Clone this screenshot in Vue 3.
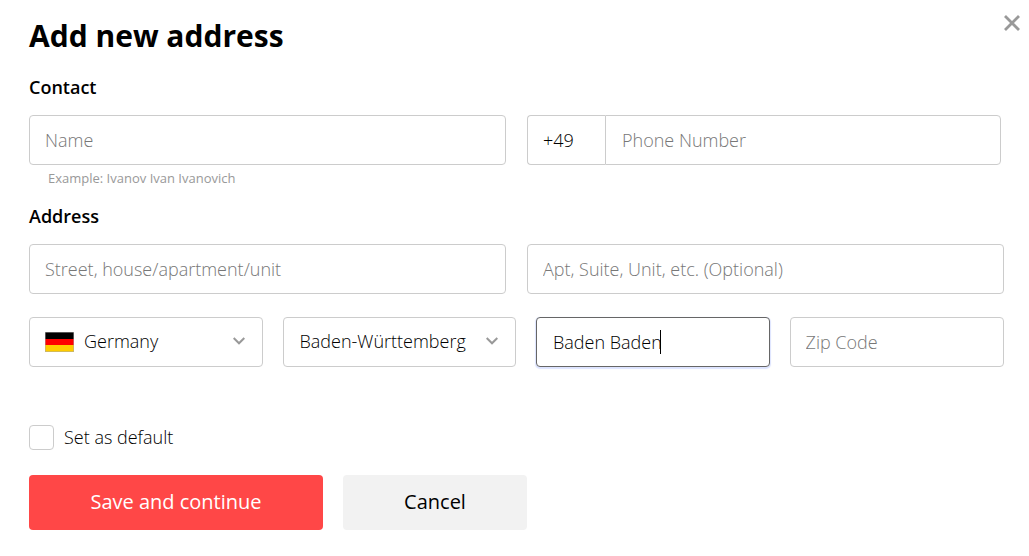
<script setup>
import { ref } from 'vue'
const name = ref('')
const phone = ref('')
const street = ref('')
const apt = ref('')
const city = ref('Baden Baden')
const zip = ref('')
const isDefault = ref(false)
</script>

<template>
  <form class="dialog" @submit.prevent>
    <button type="button" class="close" aria-label="Close">
      <svg viewBox="0 0 16 16" width="16" height="16"><path d="M1 1L15 15M15 1L1 15" stroke="#999" stroke-width="2.8" fill="none" /></svg>
    </button>
    <h1>Add new address</h1>
    <h2>Contact</h2>
    <div class="row two">
      <div>
        <input v-model="name" class="field" type="text" placeholder="Name" aria-label="Name" aria-describedby="name-hint" />
        <p id="name-hint" class="hint">Example: Ivanov Ivan Ivanovich</p>
      </div>
      <div class="phone">
        <input class="field code" type="text" value="+49" aria-label="Country code" />
        <input v-model="phone" class="field number" type="tel" placeholder="Phone Number" aria-label="Phone Number" />
      </div>
    </div>
    <h2>Address</h2>
    <div class="row two">
      <input v-model="street" class="field" type="text" placeholder="Street, house/apartment/unit" aria-label="Street" />
      <input v-model="apt" class="field" type="text" placeholder="Apt, Suite, Unit, etc. (Optional)" aria-label="Apartment" />
    </div>
    <div class="row four">
      <div class="pick">
        <select class="field country" aria-label="Country"><option>Germany</option></select>
        <svg class="flag" viewBox="0 0 29 20" width="29" height="20"><rect width="29" height="7" fill="#000" /><rect y="7" width="29" height="7" fill="#f00" /><rect y="13" width="29" height="7" fill="#fc0" /><path d="M.5 0V20M28.5 0V20M0 .5H29M0 19.5H29" stroke="#aaa" stroke-opacity=".5" /></svg>
        <svg class="chevron" viewBox="0 0 12 8" width="12" height="8"><path d="M.7 1L6 6.3L11.3 1" stroke="#999" stroke-width="2" fill="none" /></svg>
      </div>
      <div class="pick">
        <select class="field" aria-label="State"><option>Baden-Württemberg</option></select>
        <svg class="chevron" viewBox="0 0 12 8" width="12" height="8"><path d="M.7 1L6 6.3L11.3 1" stroke="#999" stroke-width="2" fill="none" /></svg>
      </div>
      <div class="pick">
        <input v-model="city" class="field city" type="text" aria-label="City" />
        <span class="caret"></span>
      </div>
      <input v-model="zip" class="field" type="text" placeholder="Zip Code" aria-label="Zip Code" />
    </div>
    <label class="default"><input v-model="isDefault" type="checkbox" />Set as default</label>
    <div class="actions">
      <button type="submit" class="save">Save and continue</button>
      <button type="button" class="cancel">Cancel</button>
    </div>
  </form>
</template>

<style>
body { background: #fff; }
</style>

<style scoped>
* { box-sizing: border-box; }
.dialog { position: relative; padding: 15px 25px 26px 29px; color: #000; font-family: "Open Sans", sans-serif; font-size: 18px; }
button, input, select { font: inherit; color: inherit; margin: 0; }
.close { position: absolute; top: 15px; right: 9px; width: 16px; height: 16px; padding: 0; border: 0; background: none; }
.close svg { display: block; }
h1 { margin: 0 0 18px; font-size: 30px; line-height: 42px; font-weight: 700; }
h2 { margin: 17px 0 16px; font-size: 18px; line-height: 24px; font-weight: 600; }
.row { display: grid; }
.two { grid-template-columns: 1fr 1fr; column-gap: 21px; }
.four { grid-template-columns: 233fr 233fr 233fr 214fr; column-gap: 20px; margin-top: 23px; }
.field { display: block; width: 100%; height: 50px; padding: 0 15px; border: 1px solid #ccc; border-radius: 4px; background: #fff; outline: 0; font-weight: 300; }
.field::placeholder { color: #777; opacity: 1; }
.hint { margin: 4px 0 0 19px; font-size: 13px; line-height: 18px; font-weight: 400; color: #999; }
.phone { display: flex; align-items: flex-start; padding-right: 3px; }
.code { flex: 0 0 78px; width: 78px; border-radius: 4px 0 0 4px; border-right: 0; }
.number { flex: 1; min-width: 0; padding-left: 16px; border-radius: 0 4px 4px 0; }
.pick { position: relative; }
select.field { appearance: none; padding-bottom: 2px; padding-left: 16px; }
select.country { padding-left: 54px; }
.flag { position: absolute; left: 16px; top: 15px; }
.chevron { position: absolute; right: 18px; top: 20px; pointer-events: none; }
.city { padding-left: 16px; border-color: #666; box-shadow: 0 1px 1px 1px #dde4ff; }
.caret { position: absolute; left: 124px; top: 13px; width: 1px; height: 24px; background: #000; pointer-events: none; }
.default { display: flex; align-items: center; width: max-content; margin-top: 58px; gap: 10px; line-height: 25px; font-weight: 300; }
.default input { appearance: none; width: 25px; height: 25px; border: 1px solid #ccc; border-radius: 4px; }
.actions { display: flex; gap: 20px; margin-top: 25px; }
.actions button { height: 55px; padding: 0 0 2px; border: 0; border-radius: 4px; font-size: 20px; }
.save { width: 294px; background: #ff4747; color: #fff; }
.cancel { width: 184px; background: #f2f2f2; }
</style>
